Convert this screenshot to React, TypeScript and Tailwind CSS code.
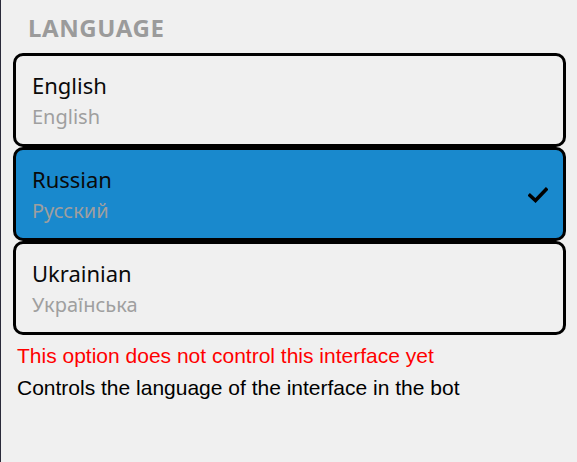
import React from "react";

const langs = [
  { name: "English", native: "English", selected: false },
  { name: "Russian", native: "Русский", selected: true },
  { name: "Ukrainian", native: "Українська", selected: false },
];

export default function App() {
  return (
    <div className="w-[577px] h-[462px] bg-[#f0f0f0] border-l border-[#2a2a3a] overflow-hidden" style={{ fontFamily: '"Noto Sans", "Open Sans", sans-serif' }}>
      <div className="pl-[12px] pr-[11px] pt-[12px]">
        <div className="pl-[15px] text-[24px] leading-[31px] font-bold tracking-[0.6px] text-[#9b9b9b]">LANGUAGE</div>
        <div className="mt-[10px] flex flex-col">
          {langs.map((l) => (
            <div
              key={l.name}
              className={`relative h-[94px] border-[3px] border-black rounded-[10px] pl-[16px] pr-[16px] flex flex-col justify-center ${l.selected ? "bg-[#1989cd]" : "bg-[#f0f0f0]"}`}
            >
              <div className="text-[22px] leading-[30px] text-[#0a0a0a]">{l.name}</div>
              <div className="mt-[4px] text-[20px] leading-[26px] text-[#9f9f9f]">{l.native}</div>
              {l.selected && (
                <svg className="absolute right-[15px] top-[37px]" width="20" height="16" viewBox="0 0 20 16">
                  <path d="M2 8.5 L7.5 13.5 L18 2.5" fill="none" stroke="black" strokeWidth="3.6" strokeLinecap="square" />
                </svg>
              )}
            </div>
          ))}
        </div>
        <div className="mt-[5px] pl-[4px] text-[21px] leading-[32px] text-[#ff0000]" style={{ fontFamily: '"Liberation Sans", Arial, sans-serif' }}>
          This option does not control this interface yet
        </div>
        <div className="pl-[4px] text-[21px] leading-[32px] text-black" style={{ fontFamily: '"Liberation Sans", Arial, sans-serif' }}>
          Controls the language of the interface in the bot
        </div>
      </div>
    </div>
  );
}
